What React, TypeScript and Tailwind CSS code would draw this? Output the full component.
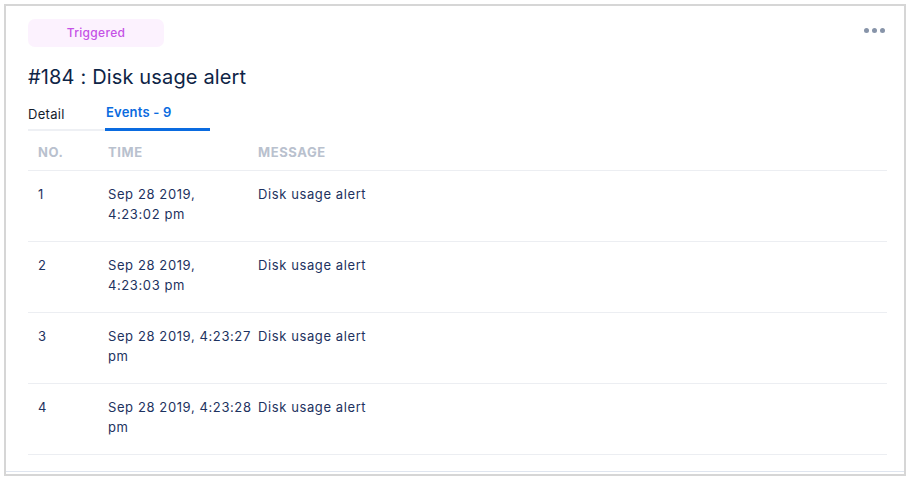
const events = [
  { no: 1, time: ["Sep 28 2019,", "4:23:02 pm"], message: "Disk usage alert" },
  { no: 2, time: ["Sep 28 2019,", "4:23:03 pm"], message: "Disk usage alert" },
  { no: 3, time: ["Sep 28 2019, 4:23:27", "pm"], message: "Disk usage alert" },
  { no: 4, time: ["Sep 28 2019, 4:23:28", "pm"], message: "Disk usage alert" },
];

export default function App() {
  return (
    <div
      className="h-[480px] w-[909px] bg-white pl-[4px] pt-[4px]"
      style={{ fontFamily: "Inter, 'Noto Sans', sans-serif" }}
    >
      <div className="h-[472px] w-[902px] overflow-hidden border-2 border-[#d6d6d6]">
        <div className="h-[466px] border-b border-[#dfe5ef] pl-[22px] pr-[17px] pt-[13px]">
          {/* status + menu */}
          <div className="flex items-start justify-between">
            <span className="flex h-[28px] w-[136px] items-center justify-center rounded-[7px] bg-[#fcf2fe] text-[12px] font-medium tracking-[0.3px] text-[#c552e6]">
              Triggered
            </span>
            <button className="mr-[2px] mt-[9px] flex gap-[3px]" aria-label="More">
              <span className="h-[5px] w-[5px] rounded-full bg-[#8794a9]" />
              <span className="h-[5px] w-[5px] rounded-full bg-[#8794a9]" />
              <span className="h-[5px] w-[5px] rounded-full bg-[#8794a9]" />
            </button>
          </div>

          <h1 className="mt-[16px] text-[20px] leading-[28px] font-normal tracking-[0.15px] text-[#0e2446]">
            #184 : Disk usage alert
          </h1>

          {/* tabs */}
          <div className="mt-[11px] flex items-end">
            <div className="w-[77px] border-b-2 border-[#eef0f4] pb-[5px] text-[13px] leading-[20px] tracking-[0.3px] text-[#141c2b]">
              Detail
            </div>
            <div className="w-[105px] border-b-[3px] border-[#0a6be0] pb-[6px] pl-px text-[13px] leading-[20px] font-semibold tracking-[0.2px] text-[#0a6be0]">
              Events - 9
            </div>
          </div>

          {/* events table */}
          <table className="w-full table-fixed border-collapse text-left">
            <thead>
              <tr className="border-b border-[#eceef2] text-[13px] leading-[20px] font-semibold tracking-[0.6px] text-[#b9c1ce]">
                <th className="w-[70px] pb-[8px] pl-[10px] pt-[11px]">NO.</th>
                <th className="w-[150px] pb-[8px] pl-[10px] pt-[11px]">TIME</th>
                <th className="pb-[8px] pl-[10px] pt-[11px]">MESSAGE</th>
              </tr>
            </thead>
            <tbody>
              {events.map((e) => (
                <tr key={e.no} className="border-b border-[#eceef2] align-top text-[13px] leading-[20px] tracking-[0.6px] text-[#1d3260]">
                  <td className="pb-[17px] pl-[10px] pt-[13px]">{e.no}</td>
                  <td className="pb-[17px] pl-[10px] pt-[13px] whitespace-nowrap">
                    {e.time[0]}
                    <br />
                    {e.time[1]}
                  </td>
                  <td className="pb-[17px] pl-[10px] pt-[13px]">{e.message}</td>
                </tr>
              ))}
            </tbody>
          </table>
        </div>
      </div>
    </div>
  );
}
